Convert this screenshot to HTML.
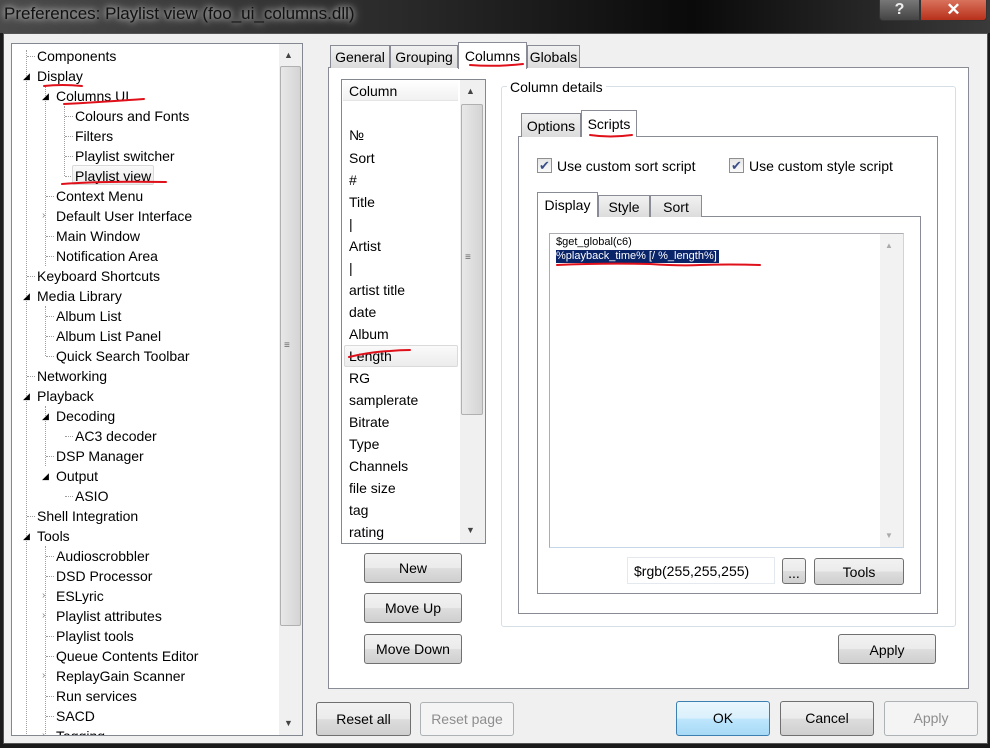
<!DOCTYPE html>
<html><head><meta charset="utf-8"><style>
*{box-sizing:border-box;margin:0;padding:0}
html,body{width:990px;height:748px;overflow:hidden}
body{background:#1a1a1a;font-family:"Liberation Sans",sans-serif;font-size:14px;color:#000;position:relative}
.a{position:absolute}
.t{position:absolute;white-space:nowrap;line-height:20px}
.btn{position:absolute;border:1px solid #707070;border-radius:3px;background:linear-gradient(#f2f2f2 0%,#ebebeb 50%,#dddddd 51%,#cfcfcf 100%);text-align:center;font-size:14px}
.tab{position:absolute;border:1px solid #898c95;border-bottom:none;background:linear-gradient(#f2f2f2,#dcdcdc);text-align:center;line-height:22px}
.tab.on{background:#fff}
.dot{position:absolute;border-left:1px dotted #a0a0a0}
.hd{position:absolute;border-top:1px dotted #a0a0a0;width:8px}
.chk{position:absolute;width:15px;height:15px;border:1px solid #8f8f8f;background:linear-gradient(#e6e6e6,#fafafa);font-size:13px;line-height:13px;text-align:center;color:#3a4f8a}
</style></head><body>
<div class="a" style="left:0;top:0;width:990px;height:33px;background:linear-gradient(90deg,#4a4a4a,#2a2a2a 40%,#0a0a0a 70%,#3a3a3a)"></div>
<div class="t" style="left:4px;top:3px;font-size:17px;color:#111;line-height:22px;text-shadow:0 0 6px #ccc,0 0 10px #bbb">Preferences: Playlist view (foo_ui_columns.dll)</div>
<div class="a" style="left:879px;top:0;width:41px;height:21px;border:1px solid #333;border-top:none;border-radius:0 0 0 4px;background:linear-gradient(#777,#444);color:#eee;font-weight:bold;font-size:16px;text-align:center;line-height:20px">?</div>
<div class="a" style="left:920px;top:0;width:67px;height:21px;border:1px solid #333;border-top:none;border-radius:0 0 4px 0;background:linear-gradient(#d9725c,#b8301a);color:#fff;font-weight:bold;font-size:17px;text-align:center;line-height:20px">✕</div>
<div class="a" style="left:3px;top:33px;width:985px;height:711px;background:#f0f0f0;border:1px solid #555"></div>
<div class="a" style="left:11px;top:43px;width:292px;height:693px;background:#fff;border:1px solid #828790;overflow:hidden">
<div style="position:absolute;left:-12px;top:-44px;width:300px;height:780px">
<div class="dot" style="left:26px;top:50px;height:686px"></div>
<div class="dot" style="left:45px;top:86px;height:180px"></div>
<div class="dot" style="left:64px;top:106px;height:70px"></div>
<div class="dot" style="left:45px;top:306px;height:50px"></div>
<div class="dot" style="left:45px;top:406px;height:60px"></div>
<div class="dot" style="left:45px;top:546px;height:190px"></div>
<div class="hd" style="left:27px;top:56px"></div><div class="hd" style="left:27px;top:276px"></div><div class="hd" style="left:27px;top:376px"></div><div class="hd" style="left:27px;top:516px"></div>
<div class="hd" style="left:65px;top:116px"></div><div class="hd" style="left:65px;top:136px"></div><div class="hd" style="left:65px;top:156px"></div><div class="hd" style="left:65px;top:176px"></div><div class="hd" style="left:65px;top:436px"></div><div class="hd" style="left:65px;top:496px"></div>
<div class="hd" style="left:46px;top:196px"></div><div class="hd" style="left:46px;top:236px"></div><div class="hd" style="left:46px;top:256px"></div><div class="hd" style="left:46px;top:316px"></div><div class="hd" style="left:46px;top:336px"></div><div class="hd" style="left:46px;top:356px"></div><div class="hd" style="left:46px;top:456px"></div><div class="hd" style="left:46px;top:556px"></div><div class="hd" style="left:46px;top:576px"></div><div class="hd" style="left:46px;top:636px"></div><div class="hd" style="left:46px;top:656px"></div><div class="hd" style="left:46px;top:696px"></div><div class="hd" style="left:46px;top:716px"></div>
<div class="t" style="left:37px;top:46px">Components</div>
<div class="t" style="left:23px;top:66px;font-size:9px">◢</div><div class="t" style="left:37px;top:66px">Display</div>
<div class="t" style="left:42px;top:86px;font-size:9px">◢</div><div class="t" style="left:56px;top:86px">Columns UI</div>
<div class="t" style="left:75px;top:106px">Colours and Fonts</div>
<div class="t" style="left:75px;top:126px">Filters</div>
<div class="t" style="left:75px;top:146px">Playlist switcher</div>
<div class="a" style="left:72px;top:165px;width:82px;height:20px;border:1px solid #d9d9d9;border-radius:2px;background:linear-gradient(#fafafa,#ececec)"></div>
<div class="t" style="left:75px;top:166px">Playlist view</div>
<div class="t" style="left:56px;top:186px">Context Menu</div>
<div class="t" style="left:42px;top:206px;font-size:10px;color:#888">›</div><div class="t" style="left:56px;top:206px">Default User Interface</div>
<div class="t" style="left:56px;top:226px">Main Window</div>
<div class="t" style="left:56px;top:246px">Notification Area</div>
<div class="t" style="left:37px;top:266px">Keyboard Shortcuts</div>
<div class="t" style="left:23px;top:286px;font-size:9px">◢</div><div class="t" style="left:37px;top:286px">Media Library</div>
<div class="t" style="left:56px;top:306px">Album List</div>
<div class="t" style="left:56px;top:326px">Album List Panel</div>
<div class="t" style="left:56px;top:346px">Quick Search Toolbar</div>
<div class="t" style="left:37px;top:366px">Networking</div>
<div class="t" style="left:23px;top:386px;font-size:9px">◢</div><div class="t" style="left:37px;top:386px">Playback</div>
<div class="t" style="left:42px;top:406px;font-size:9px">◢</div><div class="t" style="left:56px;top:406px">Decoding</div>
<div class="t" style="left:75px;top:426px">AC3 decoder</div>
<div class="t" style="left:56px;top:446px">DSP Manager</div>
<div class="t" style="left:42px;top:466px;font-size:9px">◢</div><div class="t" style="left:56px;top:466px">Output</div>
<div class="t" style="left:75px;top:486px">ASIO</div>
<div class="t" style="left:37px;top:506px">Shell Integration</div>
<div class="t" style="left:23px;top:526px;font-size:9px">◢</div><div class="t" style="left:37px;top:526px">Tools</div>
<div class="t" style="left:56px;top:546px">Audioscrobbler</div>
<div class="t" style="left:56px;top:566px">DSD Processor</div>
<div class="t" style="left:42px;top:586px;font-size:10px;color:#888">›</div><div class="t" style="left:56px;top:586px">ESLyric</div>
<div class="t" style="left:42px;top:606px;font-size:10px;color:#888">›</div><div class="t" style="left:56px;top:606px">Playlist attributes</div>
<div class="t" style="left:56px;top:626px">Playlist tools</div>
<div class="t" style="left:56px;top:646px">Queue Contents Editor</div>
<div class="t" style="left:42px;top:666px;font-size:10px;color:#888">›</div><div class="t" style="left:56px;top:666px">ReplayGain Scanner</div>
<div class="t" style="left:56px;top:686px">Run services</div>
<div class="t" style="left:56px;top:706px">SACD</div>
<div class="t" style="left:42px;top:726px;font-size:10px;color:#888">›</div><div class="t" style="left:56px;top:726px">Tagging</div>
</div></div>
<div class="a" style="left:279px;top:44px;width:23px;height:691px;background:#f0f0f0"></div>
<div class="a" style="left:280px;top:66px;width:21px;height:560px;border:1px solid #b0b0b0;border-radius:2px;background:linear-gradient(90deg,#e8e8e8,#d4d4d4)"></div>
<div class="t" style="left:284px;top:45px;font-size:9px;color:#444">▲</div>
<div class="t" style="left:284px;top:713px;font-size:9px;color:#444">▼</div>
<div class="t" style="left:284px;top:336px;font-size:10px;color:#666">≡</div>
<div class="a" style="left:328px;top:67px;width:641px;height:622px;background:#fff;border:1px solid #898c95"></div>
<div class="tab" style="left:330px;top:45px;width:60px;height:23px">General</div>
<div class="tab" style="left:390px;top:45px;width:68px;height:23px">Grouping</div>
<div class="tab on" style="left:458px;top:42px;width:69px;height:27px;line-height:26px">Columns</div>
<div class="tab" style="left:527px;top:45px;width:53px;height:23px">Globals</div>
<div class="a" style="left:341px;top:79px;width:145px;height:465px;border:1px solid #828790;background:#fff"></div>
<div class="a" style="left:343px;top:81px;width:115px;height:20px;background:linear-gradient(#fff,#f1f1f1);border-bottom:1px solid #e5e5e5"></div>
<div class="t" style="left:349px;top:81px">Column</div>
<div class="a" style="left:460px;top:80px;width:25px;height:463px;background:#f0f0f0"></div>
<div class="a" style="left:461px;top:104px;width:22px;height:311px;border:1px solid #b0b0b0;border-radius:2px;background:linear-gradient(90deg,#e8e8e8,#d4d4d4)"></div>
<div class="t" style="left:466px;top:81px;font-size:9px;color:#444">▲</div>
<div class="t" style="left:466px;top:520px;font-size:9px;color:#444">▼</div>
<div class="t" style="left:465px;top:248px;font-size:10px;color:#666">≡</div>
<div class="a" style="left:344px;top:345px;width:114px;height:22px;border:1px solid #dadada;border-radius:2px;background:linear-gradient(#fafafa,#ececec)"></div>
<div style="position:absolute;left:349px;top:0">
<div class="t" style="left:0;top:125px">№</div>
<div class="t" style="left:0;top:148px">Sort</div>
<div class="t" style="left:0;top:170px">#</div>
<div class="t" style="left:0;top:192px">Title</div>
<div class="t" style="left:0;top:214px">|</div>
<div class="t" style="left:0;top:236px">Artist</div>
<div class="t" style="left:0;top:258px">|</div>
<div class="t" style="left:0;top:280px">artist title</div>
<div class="t" style="left:0;top:302px">date</div>
<div class="t" style="left:0;top:324px">Album</div>
<div class="t" style="left:0;top:346px">Length</div>
<div class="t" style="left:0;top:368px">RG</div>
<div class="t" style="left:0;top:390px">samplerate</div>
<div class="t" style="left:0;top:412px">Bitrate</div>
<div class="t" style="left:0;top:434px">Type</div>
<div class="t" style="left:0;top:456px">Channels</div>
<div class="t" style="left:0;top:478px">file size</div>
<div class="t" style="left:0;top:500px">tag</div>
<div class="t" style="left:0;top:522px">rating</div>
</div>
<div class="btn" style="left:364px;top:553px;width:98px;height:30px;line-height:28px">New</div>
<div class="btn" style="left:364px;top:593px;width:98px;height:30px;line-height:28px">Move Up</div>
<div class="btn" style="left:364px;top:634px;width:98px;height:30px;line-height:28px">Move Down</div>
<div class="a" style="left:501px;top:86px;width:455px;height:541px;border:1px solid #d5dfe5;border-radius:3px"></div>
<div class="t" style="left:507px;top:77px;background:#fff;padding:0 3px">Column details</div>
<div class="a" style="left:518px;top:136px;width:420px;height:478px;border:1px solid #898c95"></div>
<div class="tab" style="left:521px;top:113px;width:60px;height:24px;line-height:24px">Options</div>
<div class="tab on" style="left:581px;top:110px;width:56px;height:27px;line-height:26px">Scripts</div>
<div class="chk" style="left:537px;top:158px">✔</div>
<div class="t" style="left:557px;top:156px">Use custom sort script</div>
<div class="chk" style="left:729px;top:158px">✔</div>
<div class="t" style="left:749px;top:156px">Use custom style script</div>
<div class="a" style="left:537px;top:216px;width:384px;height:378px;border:1px solid #898c95"></div>
<div class="tab on" style="left:537px;top:192px;width:61px;height:25px;line-height:24px">Display</div>
<div class="tab" style="left:598px;top:195px;width:52px;height:22px;line-height:22px">Style</div>
<div class="tab" style="left:650px;top:195px;width:52px;height:22px;line-height:22px">Sort</div>
<div class="a" style="left:549px;top:233px;width:355px;height:315px;border:1px solid #abadb3;border-right-color:#c5d6e8;border-bottom-color:#c5d6e8"></div>
<div class="a" style="left:880px;top:234px;width:23px;height:313px;background:#f2f2f2"></div>
<div class="t" style="left:885px;top:236px;font-size:8px;color:#aaa">▲</div>
<div class="t" style="left:885px;top:526px;font-size:8px;color:#aaa">▼</div>
<div class="t" style="left:556px;top:235px;font-size:11px;line-height:14px">$get_global(c6)</div>
<div class="t" style="left:556px;top:250px;font-size:11px;line-height:13px;background:#0a246a;color:#fff;padding-right:2px">%playback_time% [/ %_length%]</div>
<div class="a" style="left:627px;top:557px;width:148px;height:27px;border:1px solid #e3e9ef;background:#fff"></div>
<div class="t" style="left:634px;top:561px">$rgb(255,255,255)</div>
<div class="btn" style="left:782px;top:558px;width:24px;height:26px;line-height:28px">...</div>
<div class="btn" style="left:814px;top:558px;width:90px;height:27px;line-height:26px">Tools</div>
<div class="btn" style="left:838px;top:634px;width:98px;height:30px;line-height:30px">Apply</div>
<div class="btn" style="left:316px;top:702px;width:95px;height:34px;line-height:32px">Reset all</div>
<div class="btn" style="left:420px;top:702px;width:94px;height:34px;line-height:32px;color:#8d8d8d;border-color:#adb2b5;background:#f4f4f4">Reset page</div>
<div class="btn" style="left:676px;top:701px;width:94px;height:35px;line-height:33px;border-color:#3c7fb1;background:linear-gradient(#eaf6fd,#d9f0fc 50%,#bee6fd 51%,#a7d9f5)">OK</div>
<div class="btn" style="left:780px;top:701px;width:94px;height:35px;line-height:33px">Cancel</div>
<div class="btn" style="left:884px;top:701px;width:94px;height:35px;line-height:33px;color:#8d8d8d;border-color:#adb2b5;background:#f4f4f4">Apply</div>
<svg class="a" style="left:0;top:0" width="990" height="748" fill="none" stroke="#e0101a" stroke-width="2" stroke-linecap="round">
<path d="M44 86 Q62 84 82 86"/>
<path d="M64 104 Q100 102 144 99"/>
<path d="M62 184 Q100 181 166 182"/>
<path d="M470 65 Q495 67 523 64"/>
<path d="M590 135 Q610 138 632 135"/>
<path d="M557 265 Q600 263 650 264 Q680 266 700 265 Q730 264 760 265"/>
<path d="M349 357 Q370 352 390 351 Q400 350 410 350"/>
</svg>
</body></html>
